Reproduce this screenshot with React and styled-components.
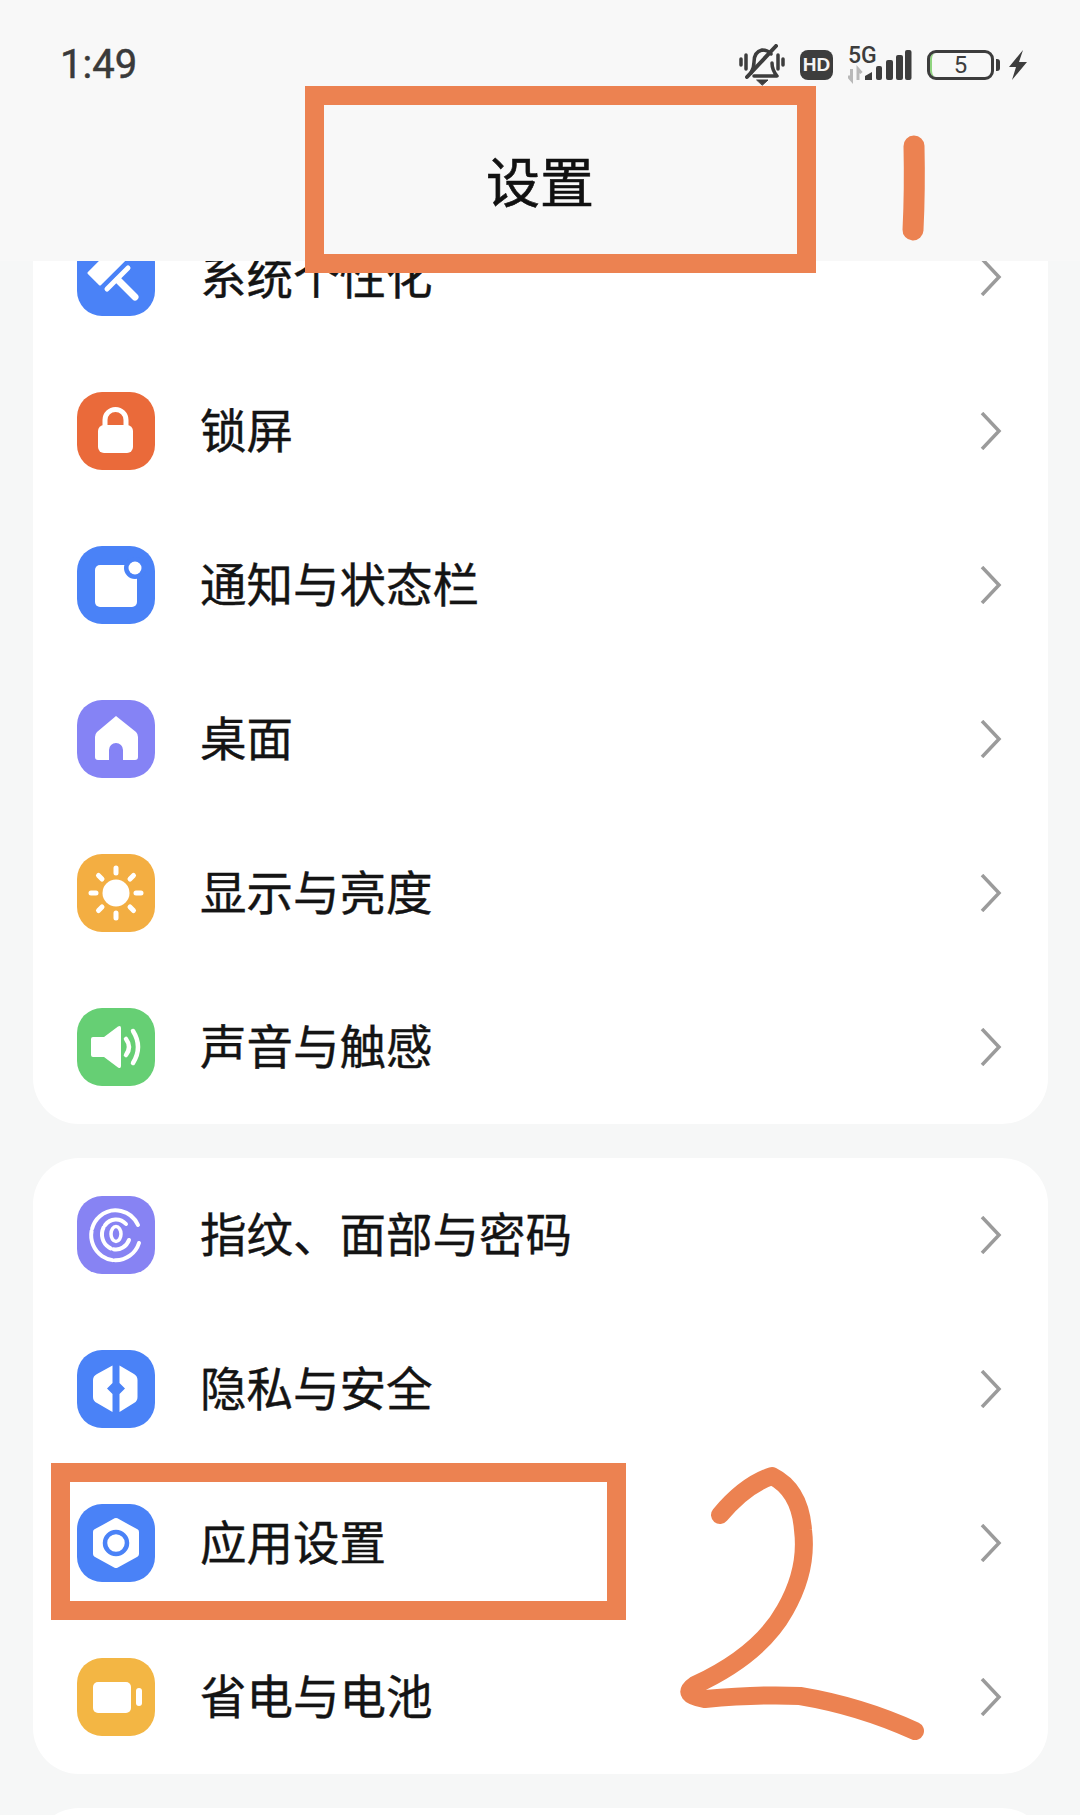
import React from 'react';
import styled, { createGlobalStyle } from 'styled-components';

const GlobalStyle = createGlobalStyle`
  html, body {
    margin: 0;
    padding: 0;
    background: #f6f7f7;
  }
  #root {
    width: 1080px;
    height: 1815px;
    overflow: hidden;
  }
`;

const Page = styled.div`
  position: relative;
  display: flex;
  flex-direction: column;
  width: 1080px;
  height: 1815px;
  overflow: hidden;
  background: #f6f7f7;
  font-family: 'Noto Sans CJK SC', 'Noto Sans', sans-serif;
  color: #1b1b1b;
`;

const StatusBar = styled.div`
  display: flex;
  align-items: center;
  justify-content: space-between;
  flex: none;
  height: 42px;
  padding: 44px 52px 0 60px;
  background: #f8f8f8;
`;

const Clock = styled.span`
  font-family: Roboto, sans-serif;
  font-size: 40px;
  line-height: 42px;
  color: #3a3a3a;
  -webkit-text-stroke: 0.5px #3a3a3a;
`;

const StatusIcons = styled.div`
  display: flex;
  align-items: center;
  height: 42px;
`;

const HdBadge = styled.span`
  display: flex;
  align-items: center;
  justify-content: center;
  width: 33px;
  height: 30px;
  margin-left: 15px;
  border-radius: 8px;
  background: #3d3d3d;
  color: #f4f4f4;
  font-family: 'Liberation Sans', sans-serif;
  font-weight: 700;
  font-size: 19px;
`;

const Network = styled.div`
  position: relative;
  width: 64px;
  height: 40px;
  margin-left: 15px;
`;

const FiveG = styled.span`
  position: absolute;
  left: 0;
  top: 0;
  font-family: Roboto, sans-serif;
  font-weight: 500;
  font-size: 23px;
  line-height: 21px;
  color: #3d3d3d;
`;

const Battery = styled.div`
  display: flex;
  align-items: center;
  justify-content: center;
  box-sizing: border-box;
  width: 67px;
  height: 30px;
  margin-left: 15px;
  border: 3px solid #3d3d3d;
  border-radius: 9px;
  box-shadow: inset 5px 0 0 -3px #8fd47f;
  font-family: Roboto, sans-serif;
  font-size: 24px;
  color: #3d3d3d;
`;

const BatteryNub = styled.span`
  width: 4px;
  height: 12px;
  margin-left: 2px;
  border-radius: 0 3px 3px 0;
  background: #3d3d3d;
`;

const Header = styled.header`
  display: flex;
  align-items: center;
  justify-content: center;
  flex: none;
  box-sizing: border-box;
  height: 175px;
  padding-top: 13px;
  background: #f8f8f8;
  font-size: 54px;
  line-height: 60px;
  color: #111;
  -webkit-text-stroke: 0.6px #111;
  z-index: 1;
`;

const Scroller = styled.main`
  flex: 1;
  overflow: hidden;
`;

const ScrollContent = styled.div`
  display: flex;
  flex-direction: column;
  gap: 34px;
  margin: -61px 32px 0 33px;
`;

const Card = styled.section`
  background: #fff;
  border-radius: 46px;
  min-height: ${p => p.$minHeight || 0}px;
`;

const Row = styled.div`
  display: flex;
  align-items: center;
  height: 154px;
  padding: 0 46px 0 44px;
`;

const IconTile = styled.div`
  flex: none;
  width: 78px;
  height: 78px;
  border-radius: 25px;
  background: ${p => p.$color};

  svg {
    display: block;
    width: 78px;
    height: 78px;
  }
`;

const Label = styled.span`
  flex: 1;
  margin: 0 0 6px 45px;
  font-size: 46.5px;
  line-height: 60px;
  color: #141414;
  -webkit-text-stroke: 0.4px #141414;
`;

const Chevron = styled.svg`
  flex: none;
  width: 22px;
  height: 38px;
  fill: none;
  stroke: #9b9b9b;
  stroke-width: 3.5;
`;

const AnnotationBox = styled.div`
  position: absolute;
  box-sizing: border-box;
  left: ${p => p.$left}px;
  top: ${p => p.$top}px;
  width: ${p => p.$width}px;
  height: ${p => p.$height}px;
  border: 19px solid #ec8251;
  z-index: 2;
`;

const Scribbles = styled.svg`
  position: absolute;
  left: 0;
  top: 0;
  width: 1080px;
  height: 1815px;
  fill: none;
  stroke: #ec8251;
  stroke-linecap: round;
  stroke-linejoin: round;
  pointer-events: none;
  z-index: 2;
`;

const Glyph = ({ children }) => (
  <svg viewBox="0 0 78 78" fill="#fff">{children}</svg>
);

const SqueegeeIcon = () => (
  <Glyph>
    <path d="M12 35 L23 46 L48 21 L37 10 Z" stroke="#fff" strokeWidth="3" strokeLinejoin="round" />
    <path d="M30 51 L51 30" stroke="#fff" strokeWidth="5" strokeLinecap="round" fill="none" />
    <path d="M41 42 L58 59" stroke="#fff" strokeWidth="7" strokeLinecap="round" fill="none" />
  </Glyph>
);

const LockIcon = () => (
  <Glyph>
    <rect x="21" y="33" width="35" height="28" rx="6" />
    <path d="M28 35 V28 a10.500 10.500 0 0 1 21 0 V35" fill="none" stroke="#fff" strokeWidth="5" />
  </Glyph>
);

const NoticeIcon = () => (
  <Glyph>
    <rect x="18" y="19" width="42" height="42" rx="5" />
    <circle cx="58" cy="22" r="11" fill="#4a82f7" />
    <circle cx="58" cy="22" r="6.5" />
  </Glyph>
);

const HomeIcon = () => (
  <Glyph>
    <path d="M39 16 L59 32 Q61 34 61 37 V57 Q61 60 58 60 H46 V50 a7 7 0 0 0 -14 0 V60 H21 Q18 60 18 57 V37 Q18 34 20 32 Z" />
  </Glyph>
);

const SunIcon = () => (
  <Glyph>
    <circle cx="39" cy="39" r="13.5" />
    <g stroke="#fff" strokeWidth="5" strokeLinecap="round">
      <path d="M39 14 V19 M39 59 V64 M14 39 H19 M59 39 H64" />
      <path d="M21.5 21.5 L25 25 M53 53 L56.5 56.5 M21.5 56.5 L25 53 M53 25 L56.5 21.5" />
    </g>
  </Glyph>
);

const SoundIcon = () => (
  <Glyph>
    <path d="M16 29 H27 L41 18.5 Q44 17 44 20 V58 Q44 61 41 59.5 L27 49 H16 Q14 49 14 47 V31 Q14 29 16 29 Z" />
    <path d="M49 31 Q55 39 49 47 M56 23 Q66 39 56 55" fill="none" stroke="#fff" strokeWidth="4.5" strokeLinecap="round" />
  </Glyph>
);

const FingerprintIcon = () => (
  <Glyph>
    <g fill="none" stroke="#fff" strokeLinecap="round">
      <path d="M61 29 A24.500 25 0 1 0 62 47" strokeWidth="4" strokeDasharray="60 2.500 40 2.500" />
      <path d="M49 28 A14 15 0 1 0 52 44" strokeWidth="4" strokeDasharray="24 3" />
      <ellipse cx="39" cy="38" rx="5" ry="7.500" strokeWidth="3.500" />
    </g>
  </Glyph>
);

const PrivacyIcon = () => (
  <Glyph>
    <path d="M35.500 15.500 V33 L30 38.500 L35.500 44 V62 L20 53 Q16 51 16 47 V30 Q16 26 20 24 Z" />
    <path d="M42.500 15.500 L57 24 Q60.500 26 60.500 30 V47 Q60.500 51 57 53 L42.500 62 V44 L48 38.500 L42.500 33 Z" />
  </Glyph>
);

const AppsIcon = () => (
  <Glyph>
    <path d="M39 17 L59 28 V50 L39 61 L19 50 V28 Z" stroke="#fff" strokeWidth="6" strokeLinejoin="round" />
    <circle cx="39" cy="39" r="11" fill="none" stroke="#4a82f7" strokeWidth="4.500" />
  </Glyph>
);

const BatteryIcon = () => (
  <Glyph>
    <rect x="16" y="24" width="38" height="31" rx="5" />
    <rect x="59" y="30" width="6" height="18" rx="3" />
  </Glyph>
);

const SilentBell = () => (
  <svg width="46" height="42" viewBox="0 0 46 42" fill="none" stroke="#3d3d3d" strokeLinecap="round" strokeLinejoin="round">
    <path d="M2 15 V21 M7 11 V25 M39 11 V25 M44 15 V21" strokeWidth="3.500" />
    <path d="M12 29 Q15 24 15 18 Q15 8 23 6 Q29 6 32 10 M33 19 Q33 26 38 32 H15" strokeWidth="3.500" />
    <path d="M8 33 L37 2" strokeWidth="4" />
    <path d="M18 36 H29 L23.500 41 Z" fill="#3d3d3d" strokeWidth="1" />
  </svg>
);

const SignalBars = () => (
  <svg width="64" height="40" viewBox="0 0 64 40" style={{ display: 'block' }}>
    <g fill="#3d3d3d">
      <path d="M17 31 L24 27 V35 H17 Z" />
      <rect x="28" y="21" width="6" height="14" rx="2" />
      <rect x="38" y="15" width="7" height="20" rx="2" />
      <rect x="48" y="10" width="7" height="25" rx="2" />
      <rect x="57" y="5" width="6.500" height="30" rx="2" />
    </g>
    <path d="M3.500 24 V35 L0 31 M10 35 V24 L13.500 28" fill="none" stroke="#b9b9b9" strokeWidth="3" />
  </svg>
);

const Bolt = () => (
  <svg width="20" height="30" viewBox="0 0 20 30" style={{ marginLeft: 8 }}>
    <path d="M15 0 L1 17 H8 L4 30 L19 12 H11 Z" fill="#3d3d3d" />
  </svg>
);

const firstGroup = [
  { label: '系统个性化', color: '#4a82f7', icon: <SqueegeeIcon /> },
  { label: '锁屏', color: '#ea6a3a', icon: <LockIcon /> },
  { label: '通知与状态栏', color: '#4a82f7', icon: <NoticeIcon /> },
  { label: '桌面', color: '#8583f5', icon: <HomeIcon /> },
  { label: '显示与亮度', color: '#f3ae42', icon: <SunIcon /> },
  { label: '声音与触感', color: '#66cf74', icon: <SoundIcon /> },
];

const secondGroup = [
  { label: '指纹、面部与密码', color: '#8783f3', icon: <FingerprintIcon /> },
  { label: '隐私与安全', color: '#4a82f7', icon: <PrivacyIcon /> },
  { label: '应用设置', color: '#4a82f7', icon: <AppsIcon /> },
  { label: '省电与电池', color: '#f3b644', icon: <BatteryIcon /> },
];

const SettingRow = ({ label, color, icon }) => (
  <Row>
    <IconTile $color={color}>{icon}</IconTile>
    <Label>{label}</Label>
    <Chevron viewBox="0 0 22 38">
      <path d="M2 1 L19 19 L2 37" />
    </Chevron>
  </Row>
);

const App = () => {
  return (
    <Page>
      <GlobalStyle />
      <StatusBar>
        <Clock>1:49</Clock>
        <StatusIcons>
          <SilentBell />
          <HdBadge>HD</HdBadge>
          <Network>
            <FiveG>5G</FiveG>
            <SignalBars />
          </Network>
          <Battery>5</Battery>
          <BatteryNub />
          <Bolt />
        </StatusIcons>
      </StatusBar>
      <Header>设置</Header>
      <Scroller>
        <ScrollContent>
          <Card>
            {firstGroup.map(item => <SettingRow key={item.label} {...item} />)}
          </Card>
          <Card>
            {secondGroup.map(item => <SettingRow key={item.label} {...item} />)}
          </Card>
          <Card $minHeight={100} />
        </ScrollContent>
      </Scroller>
      <AnnotationBox $left={305} $top={86} $width={511} $height={187} />
      <AnnotationBox $left={51} $top={1463} $width={575} $height={157} />
      <Scribbles viewBox="0 0 1080 1815">
        <path d="M914 146 Q915 190 913 230" strokeWidth="21" />
        <path
          d="M720 1515 Q745 1485 772 1476 Q800 1490 803 1530 Q808 1570 785 1610 Q760 1655 695 1685 Q680 1695 705 1699 Q760 1694 800 1696 Q860 1706 915 1731"
          strokeWidth="18"
        />
      </Scribbles>
    </Page>
  );
};

export default App;
